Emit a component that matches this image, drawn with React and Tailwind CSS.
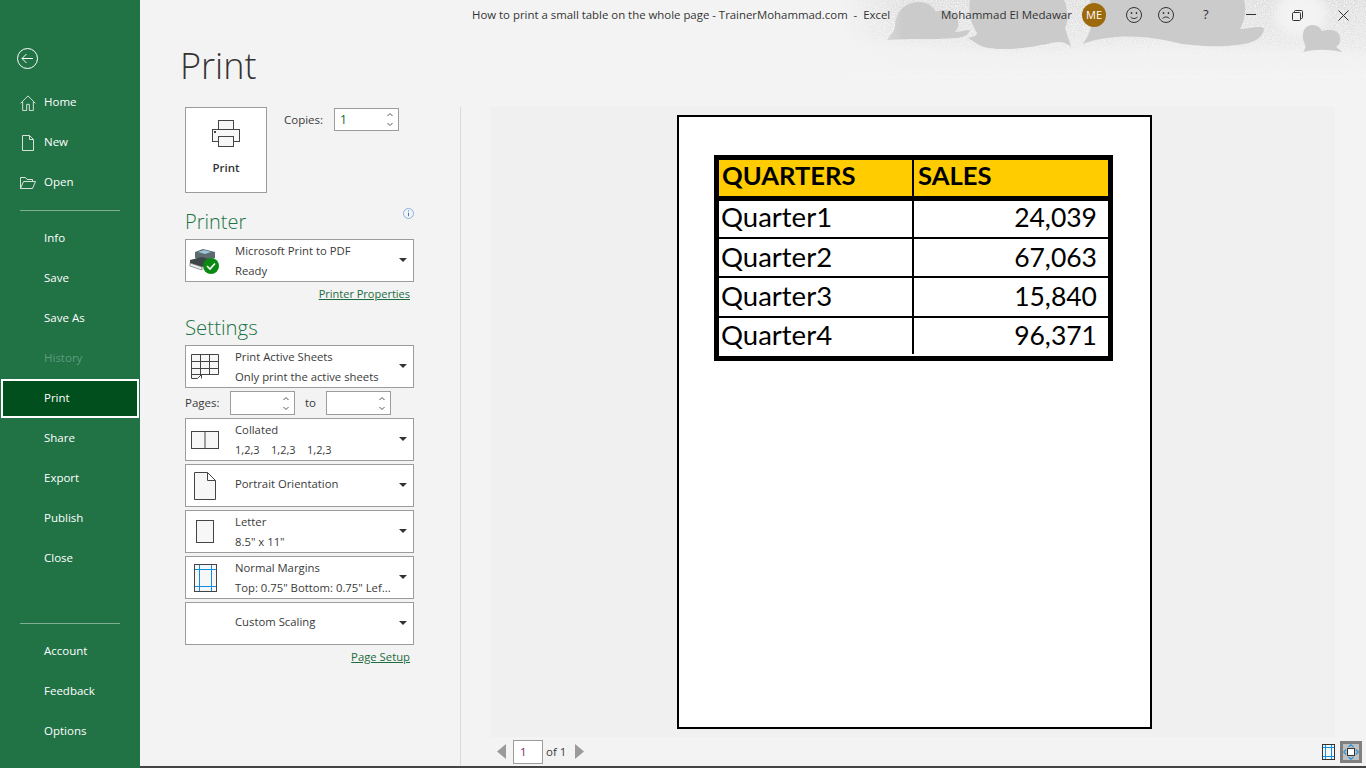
import { useState } from 'react';

const sans = "font-['Open_Sans','Noto_Sans',sans-serif]";

const topItems = ['Home', 'New', 'Open'];
const midItems = ['Info', 'Save', 'Save As', 'History', 'Print', 'Share', 'Export', 'Publish', 'Close'];
const bottomItems = ['Account', 'Feedback', 'Options'];

const tableRows = [
  { name: 'Quarter1', sales: '24,039', h: 'h-[36px]', line: 'h-[2px]', divider: 'h-full', pad: 'pb-[5px]', padNum: 'pb-[4px]' },
  { name: 'Quarter2', sales: '67,063', h: 'h-[37px]', line: 'h-[2px]', divider: 'h-full', pad: 'pb-[2px]', padNum: 'pb-[1px]' },
  { name: 'Quarter3', sales: '15,840', h: 'h-[38px]', line: 'h-[2px]', divider: 'h-full', pad: 'pb-[3px]', padNum: 'pb-[2px]' },
  { name: 'Quarter4', sales: '96,371', h: 'h-[38px]', line: 'h-0', divider: 'h-[36px] self-start', pad: 'pb-[4px]', padNum: 'pb-[3px]' },
];

const HomeIcon = () => (
  <svg width="16" height="16" viewBox="0 0 18 18" fill="none" stroke="#d5e3db" strokeWidth="1.100">
    <path d="M.5 9.500 9 1l8.500 8.500M3 7.500V17.500h4.500v-7h3v7H15V7.500" />
  </svg>
);
const NewIcon = () => (
  <svg width="12" height="16" viewBox="0 0 12 16" fill="none" stroke="#d5e3db" strokeWidth="1">
    <path d="M.5.500h7l4 4v11H.500zM7.500.500v4h4" />
  </svg>
);
const OpenIcon = () => (
  <svg width="16" height="12" viewBox="0 0 16 12" fill="none" stroke="#d5e3db" strokeWidth="1">
    <path d="M.5 11.500V.500h5l1.500 2h5.500v2M.5 11.500l3-7h12l-3 7z" />
  </svg>
);

const navIcons = { Home: <HomeIcon />, New: <NewIcon />, Open: <OpenIcon /> };

const NavItem = ({ label }) => {
  const active = label === 'Print';
  const muted = label === 'History';
  return (
    <div
      className={`relative flex h-[40px] items-center pb-[2px] pl-[44px] text-[11.500px] ${
        muted ? 'text-[#5f9a7b]' : 'text-white'
      }`}
    >
      {active && <div className="absolute left-[1px] top-[0px] h-[39px] w-[138px] border-2 border-white bg-[#004f1d]" />}
      {navIcons[label] && (
        <span className="absolute left-[20px] top-0 flex h-[40px] w-[16px] items-center justify-center">{navIcons[label]}</span>
      )}
      <span className="relative">{label}</span>
    </div>
  );
};

const Caret = () => (
  <svg width="8" height="4" viewBox="0 0 8 4" className="shrink-0">
    <path d="M0 0h8L4 4z" fill="#333" />
  </svg>
);

const Spin = () => (
  <svg width="8" height="15" viewBox="0 0 8 15" fill="none" stroke="#555" strokeWidth="1" className="shrink-0">
    <path d="M1.500 4 4 1.500 6.500 4M1.500 11 4 13.500 6.500 11" />
  </svg>
);

const PrintIcon = () => (
  <svg width="30" height="30" viewBox="0 0 30 30" fill="none" stroke="#444" strokeWidth="1">
    <rect x="7.500" y="1.500" width="15" height="9" fill="#f7f7f7" />
    <rect x="1.500" y="10.500" width="27" height="12" fill="#f7f7f7" />
    <rect x="7.500" y="17.500" width="15" height="10" fill="#f7f7f7" />
    <rect x="3" y="12" width="2" height="2" fill="#444" stroke="none" />
  </svg>
);

const PrinterDevice = () => (
  <svg width="32" height="26" viewBox="0 0 32 26">
    <path d="M6 4 14 1l12 3v6L14 13 6 10z" fill="#5c6b70" />
    <path d="M9 4l6-2 7 2-6 2z" fill="#9fc5dc" />
    <path d="M1 12l12-3 10 3v3L13 19 1 15z" fill="#3d4548" />
    <path d="M1 15l12 4v3L1 18z" fill="#eceff0" stroke="#555" strokeWidth=".6" />
    <circle cx="22" cy="18" r="8" fill="#0a8a13" />
    <path d="M18 18l3 3 5-5.500" fill="none" stroke="#fff" strokeWidth="1.600" />
  </svg>
);

const SheetsIcon = () => (
  <svg width="28" height="25" viewBox="0 0 28 25" fill="none" stroke="#444" strokeWidth="1">
    <path d="M.5.500h27v20h-17l-4 4H.500z" fill="#f7f7f7" />
    <path d="M.5 7.500h27M.5 14.500h27M.5 20.500h10M9.500.500v20M18.500.500v20M10.500 20.500v4" />
  </svg>
);
const CollatedIcon = () => (
  <svg width="28" height="18" viewBox="0 0 28 18" fill="none" stroke="#444" strokeWidth="1">
    <rect x=".5" y=".5" width="27" height="17" fill="#f7f7f7" />
    <path d="M14 .5v17" />
  </svg>
);
const PortraitIcon = () => (
  <svg width="22" height="28" viewBox="0 0 22 28" fill="none" stroke="#444" strokeWidth="1">
    <path d="M.5.500h13l8 8v19H.500zM13.500.500v8h8" fill="#f7f7f7" />
  </svg>
);
const LetterIcon = () => (
  <svg width="18" height="23" viewBox="0 0 18 23" fill="none" stroke="#444" strokeWidth="1">
    <rect x=".5" y=".5" width="17" height="22" fill="#f7f7f7" />
  </svg>
);
const MarginsIcon = () => (
  <svg width="23" height="28" viewBox="0 0 23 28" fill="none">
    <rect x=".5" y=".5" width="22" height="27" fill="#f7f7f7" stroke="#444" />
    <path d="M5.500 1v26M17.500 1v26M1 5.500h21M1 22.500h21" stroke="#0f8fe0" />
  </svg>
);
const SmallMarginsIcon = () => (
  <svg width="13" height="16" viewBox="0 0 13 16" fill="none">
    <rect x=".5" y=".5" width="12" height="15" fill="#f7f7f7" stroke="#333" />
    <path d="M3.500 1v14M9.500 1v14M1 3.500h11M1 12.500h11" stroke="#0f8fe0" />
  </svg>
);

const Dropdown = ({ icon, top, bottom }) => (
  <div className="flex h-[43px] w-[229px] items-center border border-[#9c9c9c] bg-white text-[#3a3a3a]">
    <div className="flex w-[49px] shrink-0 items-center justify-center pr-[11px]">{icon}</div>
    <div className={`min-w-0 flex-1 text-[11.300px] leading-[20px] ${bottom ? '' : '-mt-[3px]'}`}>
      <div className="whitespace-nowrap">{top}</div>
      {bottom && <div className="whitespace-nowrap">{bottom}</div>}
    </div>
    <div className="pb-[2px] pr-[6px]">
      <Caret />
    </div>
  </div>
);

const NumberBox = ({ className, value }) => (
  <div className={`flex items-center justify-between border border-[#9c9c9c] bg-white pl-[5px] pr-[4px] ${className}`}>
    <span className="text-[12px] text-[#0a6b2d]">{value}</span>
    <Spin />
  </div>
);

const CloudBackdrop = () => (
  <svg
    className="pointer-events-none absolute right-0 top-0"
    width="526"
    height="78"
    viewBox="0 0 526 78"
  >
    <defs>
      <linearGradient id="fade" x1="0" y1="0" x2="0" y2="1">
        <stop offset="0" stopColor="#dadada" />
        <stop offset="0.6" stopColor="#e6e6e6" />
        <stop offset="1" stopColor="#f3f3f3" />
      </linearGradient>
      <linearGradient id="side" x1="0" y1="0" x2="1" y2="0">
        <stop offset="0" stopColor="#f3f3f3" />
        <stop offset="0.12" stopColor="#f3f3f3" stopOpacity="0" />
      </linearGradient>
      <filter id="speck" x="0" y="0" width="100%" height="100%">
        <feTurbulence type="fractalNoise" baseFrequency="0.9" numOctaves="2" seed="4" />
        <feColorMatrix values="0 0 0 0 .95  0 0 0 0 .95  0 0 0 0 .95  1.800 0 0 0 -.55" />
      </filter>
      <filter id="soft">
        <feGaussianBlur stdDeviation="5" />
      </filter>
    </defs>
    <rect width="526" height="78" fill="url(#fade)" />
    <rect width="526" height="78" filter="url(#speck)" />
    <path d="M0 78V42c60-6 110 8 170 10 60 2 120-12 190-6 50 6 110-2 166 8v24z" fill="#f3f3f3" opacity=".75" filter="url(#soft)" />
    <ellipse cx="461" cy="14" rx="26" ry="22" fill="#f3f3f3" filter="url(#soft)" />
    <g fill="#cbcbcb" transform="translate(20 0)">
      <path d="M27 40c3-6 8-8 8-14 0-12 8-24 24-24 8 0 14 4 17 10 8-4 20-2 22 8 1 5 0 9-3 12 5 0 10-2 15-2-2 6-8 8-16 8-22 2-44 0-67 2z" />
      <path d="M110 0h94c4 10 5 20 1 28 2 6 4 12 6 19-8-7-14-5-24-3-20 4-48 8-66 2-4-2-8-5-13-8 6-1 9-3 9-5-6-10-9-22-7-33z" />
      <path d="M222 44c6-6 9-14 10-24 0-8-1-14-2-20h154c2 8 2 18-4 29 8 0 18-4 24-1 0 8-8 14-20 16-24 4-44 2-62 0-30-8-66-12-100 0z" />
      <path d="M443 52c3-3 3-6 1-10-3-8 0-17 8-17 5 0 9 3 10 6 6-2 17-2 18 6 1 5-1 8-4 10 2 2 5 3 6 5-14-3-26-3-39 0z" />
    </g>
    <rect width="526" height="78" fill="url(#side)" />
  </svg>
);

const TitleBar = () => (
  <div className="relative z-10 flex h-[30px] items-center text-[11.500px] text-[#333]">
    <div className="ml-[332px] w-[469px] whitespace-pre text-[11.400px]">How to print a small table on the whole page - TrainerMohammad.com  -  Excel</div>
    <div className="w-[141px] whitespace-nowrap">Mohammad El Medawar</div>
    <div className="flex h-[24px] w-[24px] items-center justify-center rounded-full bg-[#9c6a0c] text-[11px] text-white">ME</div>
    <svg className="ml-[20px]" width="16" height="16" viewBox="0 0 16 16" fill="none" stroke="#333">
      <circle cx="8" cy="8" r="7.500" />
      <circle cx="5.500" cy="6" r=".6" fill="#333" />
      <circle cx="10.500" cy="6" r=".6" fill="#333" />
      <path d="M4.500 10c1.800 2 5.200 2 7 0" />
    </svg>
    <svg className="ml-[16px]" width="16" height="16" viewBox="0 0 16 16" fill="none" stroke="#333">
      <circle cx="8" cy="8" r="7.500" />
      <circle cx="5.500" cy="6" r=".6" fill="#333" />
      <circle cx="10.500" cy="6" r=".6" fill="#333" />
      <path d="M4.500 11.500c1.800-2 5.200-2 7 0" />
    </svg>
    <span className="ml-[29px] w-[8px] text-[13px]">?</span>
    <svg className="ml-[35px]" width="10" height="2" viewBox="0 0 10 2">
      <path d="M0 .5h10" stroke="#333" />
    </svg>
    <svg className="ml-[36px]" width="11" height="11" viewBox="0 0 11 11" fill="none" stroke="#333">
      <rect x=".5" y="2.500" width="8" height="8" rx="1" />
      <path d="M2.500 2.500v-1a1 1 0 0 1 1-1h6a1 1 0 0 1 1 1v6a1 1 0 0 1-1 1h-1" />
    </svg>
    <svg className="ml-[35px]" width="11" height="11" viewBox="0 0 11 11" fill="none" stroke="#333">
      <path d="M.5.500l10 10M10.500.500l-10 10" />
    </svg>
  </div>
);

const PrintPanel = () => (
  <div className="w-[321px] shrink-0 border-r border-[#dcdcdc] pl-[45px] text-[#3a3a3a]">
    <div className="flex">
      <div className="flex h-[86px] w-[82px] flex-col items-center border border-[#9c9c9c] bg-white pt-[11px]">
        <PrintIcon />
        <span className="mt-[9px] text-[11.500px] font-semibold leading-[20px] text-[#333]">Print</span>
      </div>
      <div className="ml-[17px] flex h-[25px] items-start">
        <span className="w-[50px] pt-[4px] text-[11.500px] leading-[18px]">Copies:</span>
        <NumberBox className="mt-[1px] h-[23px] w-[65px]" value="1" />
      </div>
    </div>

    <div className="flex w-[229px] items-start justify-between pt-[15px]">
      <h2 className="text-[20px] font-light leading-[28px] text-[#217346]">Printer</h2>
      <svg width="11" height="11" viewBox="0 0 11 11" fill="none">
        <circle cx="5.500" cy="5.500" r="5" stroke="#8ab1e0" />
        <path d="M5.500 2.500v1M5.500 4.800v3.400" stroke="#3f78c4" />
      </svg>
    </div>
    <div className="mt-[3px]">
      <Dropdown icon={<PrinterDevice />} top="Microsoft Print to PDF" bottom="Ready" />
    </div>
    <div className="flex w-[225px] justify-end pt-[3px]">
      <a className="text-[11px] leading-[18px] text-[#1d6b41] underline">Printer Properties</a>
    </div>

    <h2 className="pt-[10px] text-[20.400px] font-light leading-[28px] text-[#217346]">Settings</h2>
    <div className="mt-[4px]">
      <Dropdown icon={<SheetsIcon />} top="Print Active Sheets" bottom="Only print the active sheets" />
    </div>
    <div className="flex h-[30px] items-center text-[11.500px]">
      <span className="w-[45px]">Pages:</span>
      <NumberBox className="h-[24px] w-[65px]" value="" />
      <span className="w-[31px] text-center">to</span>
      <NumberBox className="h-[24px] w-[65px]" value="" />
    </div>
    <div className="flex flex-col gap-[3px]">
      <Dropdown
        icon={<CollatedIcon />}
        top="Collated"
        bottom={
          <span className="flex gap-[12px] text-[11px]">
            <span className="w-[24px]">1,2,3</span>
            <span className="w-[24px]">1,2,3</span>
            <span className="w-[24px]">1,2,3</span>
          </span>
        }
      />
      <Dropdown icon={<PortraitIcon />} top="Portrait Orientation" />
      <Dropdown icon={<LetterIcon />} top="Letter" bottom='8.5" x 11"' />
      <Dropdown icon={<MarginsIcon />} top="Normal Margins" bottom='Top: 0.75" Bottom: 0.75" Lef...' />
      <Dropdown icon={null} top="Custom Scaling" />
    </div>
    <div className="flex w-[225px] justify-end pt-[3px]">
      <a className="text-[11.300px] leading-[18px] text-[#1d6b41] underline">Page Setup</a>
    </div>
  </div>
);

const SheetTable = () => (
  <div className="ml-[35px] mt-[38px] w-[399px] border-[5px] border-black font-['Lato',sans-serif] text-black">
    <div className="flex h-[36px] items-center bg-[#ffcc00] text-[25.600px] font-bold leading-none">
      <div className="flex h-full w-[193px] items-center pb-[5px] pl-[3px]">QUARTERS</div>
      <div className="h-full w-[2px] bg-black" />
      <div className="flex h-full flex-1 items-center pb-[5px] pl-[4px]">SALES</div>
    </div>
    <div className="h-[5px] bg-black" />
    {tableRows.map((row) => (
      <div key={row.name}>
        <div className={`flex items-center leading-none ${row.h}`}>
          <div className={`flex h-full w-[193px] items-center pl-[2px] text-[27.500px] ${row.pad}`}>{row.name}</div>
          <div className={`w-[2px] bg-black ${row.divider}`} />
          <div className={`flex h-full flex-1 items-center justify-end pr-[11px] text-[26.500px] ${row.padNum}`}>{row.sales}</div>
        </div>
        <div className={`bg-black ${row.line}`} />
      </div>
    ))}
  </div>
);

const Preview = () => (
  <div className="flex min-w-0 flex-1 flex-col pl-[29px] pr-[31px]">
    <div className="h-[630px] bg-[#f0f0f0] pt-[8px]">
      <div className="ml-[187px] h-[614px] w-[475px] border-2 border-black bg-white">
        <SheetTable />
      </div>
    </div>
    <div className="relative flex h-[29px] items-center text-[11.500px] text-[#3a3a3a]">
      <svg className="ml-[7px]" width="9" height="15" viewBox="0 0 9 15">
        <path d="M9 0v15L0 7.500z" fill="#9a9a9a" />
      </svg>
      <div className="ml-[7px] flex h-[24px] w-[30px] items-center border border-[#9c9c9c] bg-white pl-[6px] text-[#7a1f5c]">1</div>
      <span className="ml-[3px]">of 1</span>
      <svg className="ml-[9px]" width="9" height="15" viewBox="0 0 9 15">
        <path d="M0 0v15l9-7.500z" fill="#9a9a9a" />
      </svg>
      <div className="flex-1" />
      <SmallMarginsIcon />
      <div className="-mr-[27px] ml-[5px] flex h-[22px] w-[22px] shrink-0 items-center justify-center border-[3px] border-[#808080] bg-[#bfbfbf]">
        <svg width="16" height="16" viewBox="0 0 16 16" fill="none" className="shrink-0">
          <rect x="4.500" y="4.500" width="7" height="7" fill="#fff" stroke="#333" />
          <path d="M5.500 3 8 .8 10.500 3M5.500 13 8 15.200 10.500 13M3 5.500.8 8 3 10.500M13 5.500 15.200 8 13 10.500" stroke="#2f94d8" strokeWidth="1.300" />
        </svg>
      </div>
    </div>
  </div>
);

export default function App() {
  const [page] = useState('print');

  return (
    <div data-page={page} className={`relative flex h-[768px] w-[1366px] overflow-hidden bg-[#f3f3f3] ${sans}`}>
      <aside className="flex w-[140px] shrink-0 flex-col bg-[#217346]">
        <div className="pl-[17px] pt-[48px]">
          <svg width="21" height="21" viewBox="0 0 21 21" fill="none" stroke="#fff" strokeWidth="1">
            <circle cx="10.500" cy="10.500" r="10" />
            <path d="M16 10.500H5M9.500 6l-4.500 4.500L9.500 15" />
          </svg>
        </div>
        <div className="mt-[14px]">
          {topItems.map((label) => (
            <NavItem key={label} label={label} />
          ))}
        </div>
        <div className="mx-[20px] my-[7px] h-px bg-[#7fae95]" />
        <div className="mt-[1px]">
          {midItems.map((label) => (
            <NavItem key={label} label={label} />
          ))}
        </div>
        <div className="mx-[20px] mt-[44px] mb-[8px] h-px bg-[#7fae95]" />
        <div>
          {bottomItems.map((label) => (
            <NavItem key={label} label={label} />
          ))}
        </div>
      </aside>

      <main className="relative flex min-w-0 flex-1 flex-col">
        <CloudBackdrop />
        <TitleBar />
        <div className="relative z-10 flex h-[77px] items-start pl-[40px]">
          <h1 className="pt-[11px] text-[36px] font-light leading-[50px] text-[#333]">Print</h1>
        </div>
        <div className="relative z-10 flex flex-1">
          <PrintPanel />
          <Preview />
        </div>
        <div className="relative z-10 h-[2px] bg-[#444]" />
      </main>
    </div>
  );
}
